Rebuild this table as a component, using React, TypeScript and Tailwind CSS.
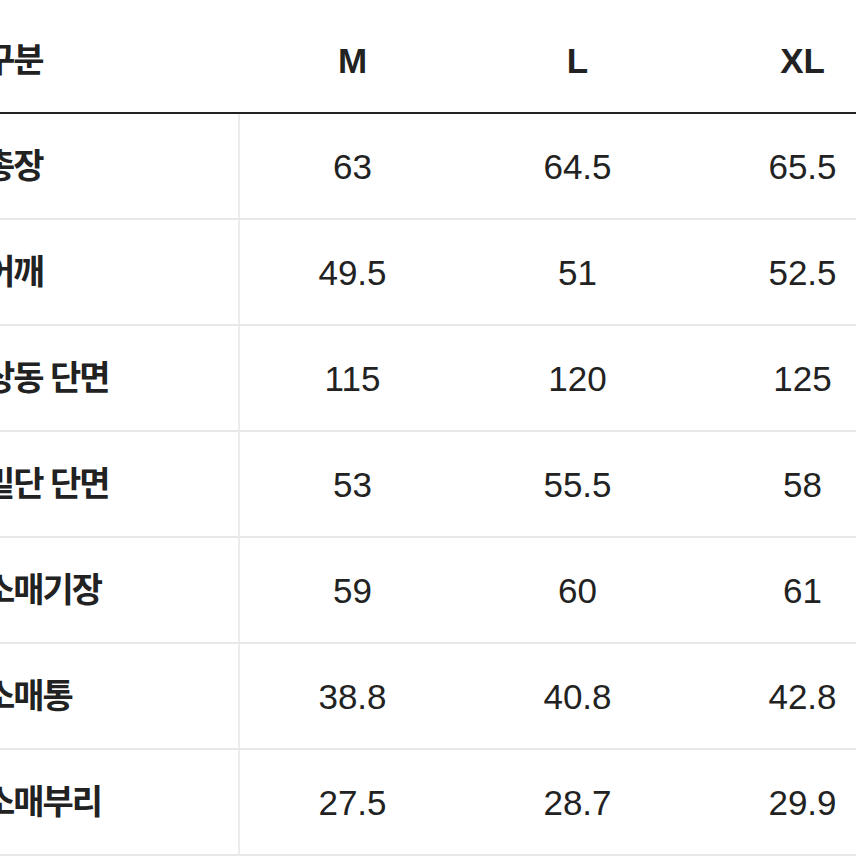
import React from "react";

const rows: [string, string, string, string][] = [
  ["총장", "63", "64.5", "65.5"],
  ["어깨", "49.5", "51", "52.5"],
  ["상동 단면", "115", "120", "125"],
  ["밑단 단면", "53", "55.5", "58"],
  ["소매기장", "59", "60", "61"],
  ["소매통", "38.8", "40.8", "42.8"],
  ["소매부리", "27.5", "28.7", "29.9"],
];

const font = { fontFamily: '"Liberation Sans", "Noto Sans CJK KR", sans-serif' };

export default function App() {
  return (
    <div className="w-[856px] h-[856px] overflow-hidden bg-white text-[#222]" style={font}>
      <div className="-ml-[22px] w-[937px]">
        <div className="grid grid-cols-[262px_225px_225px_225px] h-[114px] pt-[8px] border-b-2 border-[#222] items-center">
          <div className="pl-[6px] text-[34px] tracking-[-2px] font-bold leading-none">구분</div>
          <div className="text-[35px] font-bold text-center leading-none">M</div>
          <div className="text-[35px] font-bold text-center leading-none">L</div>
          <div className="text-[35px] font-bold text-center leading-none">XL</div>
        </div>
        {rows.map((r) => (
          <div
            key={r[0]}
            className="grid grid-cols-[262px_225px_225px_225px] h-[106px] border-b-2 border-[#e8e8e8]"
          >
            <div className="flex items-center pl-[6px] border-r-2 border-[#ececec] text-[34px] tracking-[-2px] font-bold leading-none whitespace-nowrap">
              {r[0]}
            </div>
            <div className="flex items-center justify-center text-[35px] leading-none">{r[1]}</div>
            <div className="flex items-center justify-center text-[35px] leading-none">{r[2]}</div>
            <div className="flex items-center justify-center text-[35px] leading-none">{r[3]}</div>
          </div>
        ))}
      </div>
    </div>
  );
}
